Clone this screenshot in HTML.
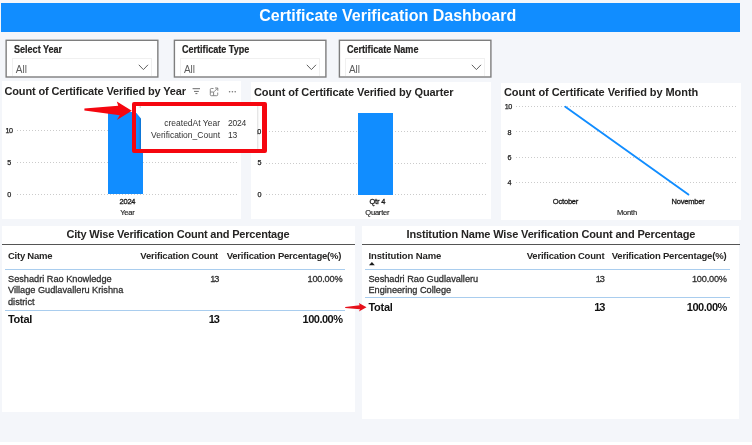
<!DOCTYPE html>
<html>
<head>
<meta charset="utf-8">
<title>Certificate Verification Dashboard</title>
<style>
*{box-sizing:border-box;margin:0;padding:0}
html,body{width:752px;height:445px;overflow:hidden;background:#fff}
body{font-family:"Liberation Sans",sans-serif;color:#252423;position:relative}
.bg{position:absolute;left:0;top:0;width:752px;height:442px;background:#f4f6fa}
.abs{position:absolute;white-space:nowrap}
.hdr{position:absolute;left:1.3px;top:3px;width:739.2px;height:28.5px;background:#118dff}
.hdr span{position:absolute;left:258px;top:1.6px;font-size:16px;font-weight:bold;color:#fff;line-height:22px;white-space:nowrap}
.slicer{position:absolute;top:39.5px;width:153px;height:38.4px;overflow:hidden}
.slicer .lbl{position:absolute;left:8.3px;top:4.6px;font-size:10px;font-weight:bold;line-height:12px;color:#252423;white-space:nowrap;transform:scaleX(0.905);transform-origin:0 0;-webkit-text-stroke:0.2px #252423}
.slicer .box{position:absolute;left:6px;top:18px;width:140px;height:18px;border:1px solid #f0f0f0;border-bottom:none}
.slicer .all{position:absolute;left:10.3px;top:24.6px;font-size:10px;line-height:12px;color:#5c5c5c;white-space:nowrap}
.slicer svg{position:absolute;left:132.4px;top:24.6px}
.panel{position:absolute;background:#fff}
.ttl{position:absolute;font-size:11px;font-weight:bold;line-height:14px;color:#252423;white-space:nowrap}
.ax{position:absolute;font-size:7.2px;line-height:9px;color:#1c1c1c;white-space:nowrap;-webkit-text-stroke:0.25px #1c1c1c;letter-spacing:-0.45px}
.axc{position:absolute;font-size:7.5px;line-height:9px;color:#1c1c1c;white-space:nowrap;transform:translateX(-50%);-webkit-text-stroke:0.15px #1c1c1c;letter-spacing:-0.2px}
.grid{position:absolute;height:1px;background:repeating-linear-gradient(90deg,#cbcbcb 0 1px,transparent 1px 3px)}
.th{position:absolute;font-size:9.5px;font-weight:bold;line-height:12px;color:#252423;white-space:nowrap;letter-spacing:-0.2px}
.td{position:absolute;font-size:9.2px;line-height:11.7px;color:#2e2e2e;white-space:nowrap;-webkit-text-stroke:0.28px #2e2e2e}
.tot{position:absolute;font-size:11px;font-weight:bold;line-height:14px;color:#111;white-space:nowrap}
.r{transform:translateX(-100%)}
.tk{-webkit-text-stroke:0.32px #1c1c1c}
.dark{position:absolute;height:1px;background:#555}
.blue{position:absolute;height:1px;background:#a9cdee}
</style>
</head>
<body>
<div id="wrap" style="position:absolute;left:0;top:0;width:752px;height:445px;will-change:transform">
<div class="bg"></div>

<!-- header -->
<div class="hdr"><span>Certificate Verification Dashboard</span></div>

<!-- slicers -->
<svg class="abs" style="left:0;top:36px" width="500" height="46" viewBox="0 36 500 46">
  <g fill="#fff" stroke="#7e7e7e" stroke-width="1.4">
    <rect x="6.15" y="40.3" width="151.7" height="36.7"/>
    <rect x="174.4" y="40.3" width="151.5" height="36.7"/>
    <rect x="339.4" y="40.3" width="151.5" height="36.7"/>
  </g>
</svg>
<div class="slicer" style="left:5.5px">
  <div class="lbl">Select Year</div><div class="box"></div><div class="all">All</div>
  <svg width="11" height="7" viewBox="0 0 11 7"><path d="M0.8 0.8 L5.4 5.6 L10 0.8" fill="none" stroke="#606060" stroke-width="1"/></svg>
</div>
<div class="slicer" style="left:173.6px">
  <div class="lbl">Certificate Type</div><div class="box"></div><div class="all">All</div>
  <svg width="11" height="7" viewBox="0 0 11 7"><path d="M0.8 0.8 L5.4 5.6 L10 0.8" fill="none" stroke="#606060" stroke-width="1"/></svg>
</div>
<div class="slicer" style="left:338.6px">
  <div class="lbl">Certificate Name</div><div class="box"></div><div class="all">All</div>
  <svg width="11" height="7" viewBox="0 0 11 7"><path d="M0.8 0.8 L5.4 5.6 L10 0.8" fill="none" stroke="#606060" stroke-width="1"/></svg>
</div>

<!-- panel 1 : by Year -->
<div class="panel" style="left:1.5px;top:80.6px;width:239.7px;height:138.2px"></div>
<div class="ttl" style="left:4.5px;top:84px;letter-spacing:-0.15px">Count of Certificate Verified by Year</div>
<svg class="abs" style="left:192px;top:87px" width="46" height="10" viewBox="0 0 46 10">
  <g stroke="#7a7a7a" stroke-width="0.9" fill="none">
    <path d="M0.6 1.7h7.4M2 4.4h4.8M3.4 6.6h2" stroke="#6c6c6c" stroke-width="1"/>
    <path d="M21.5 1.5h-2.2a1 1 0 0 0-1 1v5.2a1 1 0 0 0 1 1h5.4a1 1 0 0 0 1-1V5.6M18.3 5h3.3v3.6M22 4.8l3.6-3.6M23 1h2.8v2.8"/>
  </g>
  <g fill="#777"><circle cx="37.6" cy="4.8" r="0.8"/><circle cx="40.4" cy="4.8" r="0.8"/><circle cx="43.2" cy="4.8" r="0.8"/></g>
</svg>
<div class="grid" style="left:17px;top:130px;width:222px"></div>
<div class="grid" style="left:17px;top:162px;width:222px"></div>
<div class="grid" style="left:17px;top:194px;width:222px"></div>
<div class="ax" style="left:5.5px;top:126px">10</div>
<div class="ax" style="left:7.2px;top:158px">5</div>
<div class="ax" style="left:7.2px;top:189.5px">0</div>
<div class="abs" style="left:108.4px;top:111.6px;width:34.2px;height:82.4px;background:#118dff"></div>
<div class="axc tk" style="left:127.4px;top:196.5px">2024</div>
<div class="axc" style="left:127.4px;top:207.5px">Year</div>

<!-- panel 2 : by Quarter -->
<div class="panel" style="left:250.8px;top:82.4px;width:240.1px;height:137px"></div>
<div class="ttl" style="left:254px;top:84.5px;letter-spacing:-0.1px">Count of Certificate Verified by Quarter</div>
<div class="grid" style="left:266px;top:131px;width:221px"></div>
<div class="grid" style="left:266px;top:163px;width:221px"></div>
<div class="grid" style="left:266px;top:194px;width:221px"></div>
<div class="ax" style="left:253.8px;top:126.6px">10</div>
<div class="ax" style="left:257.4px;top:158.4px">5</div>
<div class="ax" style="left:257.4px;top:190.2px">0</div>
<div class="abs" style="left:358.3px;top:113px;width:34.5px;height:81.6px;background:#118dff"></div>
<div class="axc tk" style="left:377.3px;top:197px">Qtr 4</div>
<div class="axc" style="left:377.3px;top:208px">Quarter</div>

<!-- panel 3 : by Month -->
<div class="panel" style="left:501.3px;top:83.3px;width:239.4px;height:136.4px"></div>
<div class="ttl" style="left:504px;top:84.5px;letter-spacing:-0.07px">Count of Certificate Verified by Month</div>
<div class="grid" style="left:515.5px;top:106px;width:222.5px"></div>
<div class="grid" style="left:515.5px;top:131px;width:222.5px"></div>
<div class="grid" style="left:515.5px;top:157px;width:222.5px"></div>
<div class="grid" style="left:515.5px;top:182px;width:222.5px"></div>
<div class="ax" style="left:504.8px;top:102.3px">10</div>
<div class="ax" style="left:507.6px;top:127.5px">8</div>
<div class="ax" style="left:507.6px;top:152.8px">6</div>
<div class="ax" style="left:507.6px;top:178px">4</div>
<svg class="abs" style="left:500px;top:82px" width="241" height="138" viewBox="500 82 241 138">
  <line x1="565.3" y1="106.8" x2="688.4" y2="194.6" stroke="#118dff" stroke-width="1.9" stroke-linecap="round"/>
</svg>
<div class="axc tk" style="left:565.5px;top:197px">October</div>
<div class="axc tk" style="left:688px;top:197px">November</div>
<div class="axc" style="left:627px;top:208px">Month</div>

<!-- tooltip + red annotation -->
<div class="abs" style="left:141.3px;top:105px;width:115.7px;height:45px;background:#fff;box-shadow:-1.5px 0 2px rgba(0,0,0,0.22),1px 0 2px rgba(0,0,0,0.12)"></div>
<svg class="abs" style="left:136px;top:108px" width="8" height="13" viewBox="136 108 8 13"><path d="M136 108 H142.5 V120.6 L136 112.6 Z" fill="#fff"/></svg>
<div class="abs r" style="left:220px;top:118px;font-size:8.5px;line-height:11px;color:#333">createdAt Year</div>
<div class="abs" style="left:228px;top:118px;font-size:8.5px;line-height:11px;color:#333;letter-spacing:-0.25px">2024</div>
<div class="abs r" style="left:220px;top:130px;font-size:8.5px;line-height:11px;color:#333">Verification_Count</div>
<div class="abs" style="left:228px;top:130px;font-size:8.5px;line-height:11px;color:#333;letter-spacing:-0.25px">13</div>
<div class="abs" style="left:131.8px;top:102px;width:135px;height:50.6px;border:4.8px solid #f5060f;border-right-width:5.6px;border-radius:2px"></div>
<svg class="abs" style="left:80px;top:98px" width="56" height="26" viewBox="80 98 56 26">
  <path d="M84.4 108.4 L118.2 105.8 L116.8 101.6 L131.8 110.8 L116.8 120 L119.8 115.2 L84.4 110.6 Z" fill="#f5060f"/>
</svg>

<!-- table 1 : City -->
<div class="panel" style="left:1.5px;top:226px;width:353.5px;height:185.6px"></div>
<div class="ttl" style="left:66.5px;top:227px;letter-spacing:-0.2px">City Wise Verification Count and Percentage</div>
<div class="dark" style="left:1.5px;top:244.2px;width:353.5px"></div>
<div class="th" style="left:8px;top:249.5px;letter-spacing:-0.25px">City Name</div>
<div class="th r" style="left:218px;top:249.5px">Verification Count</div>
<div class="th r" style="left:341.3px;top:249.5px">Verification Percentage(%)</div>
<div class="blue" style="left:4.5px;top:268.6px;width:340.5px"></div>
<div class="td" style="left:8px;top:273.5px">Seshadri Rao Knowledge<br>Village Gudlavalleru Krishna<br>district</div>
<div class="td r" style="left:218.3px;top:273.5px;letter-spacing:-1.1px">13</div>
<div class="td r" style="left:342.4px;top:273.5px;letter-spacing:-0.2px">100.00%</div>
<div class="blue" style="left:4.5px;top:309.5px;width:340.5px"></div>
<div class="tot" style="left:8px;top:312px;letter-spacing:-0.3px">Total</div>
<div class="tot r" style="left:219px;top:312px;letter-spacing:-1px">13</div>
<div class="tot r" style="left:342.5px;top:312px;letter-spacing:-0.5px">100.00%</div>

<!-- table 2 : Institution -->
<div class="panel" style="left:361.7px;top:226px;width:377.8px;height:192.5px"></div>
<div class="ttl" style="left:406.5px;top:227px;letter-spacing:-0.15px">Institution Name Wise Verification Count and Percentage</div>
<div class="dark" style="left:361.6px;top:244.2px;width:378px"></div>
<div class="th" style="left:368.4px;top:249.5px;letter-spacing:-0.1px">Institution Name</div>
<svg class="abs" style="left:368.8px;top:262.4px" width="7" height="4" viewBox="0 0 7 4"><path d="M0 3.3 L2.9 0 L5.8 3.3 Z" fill="#1a1a1a"/></svg>
<div class="th r" style="left:604.4px;top:249.5px">Verification Count</div>
<div class="th r" style="left:726.4px;top:249.5px">Verification Percentage(%)</div>
<div class="blue" style="left:365.2px;top:268.6px;width:364.5px"></div>
<div class="td" style="left:368.4px;top:273.5px">Seshadri Rao Gudlavalleru<br>Engineering College</div>
<div class="td r" style="left:603.8px;top:273.5px;letter-spacing:-1.1px">13</div>
<div class="td r" style="left:726.8px;top:273.5px;letter-spacing:-0.2px">100.00%</div>
<div class="blue" style="left:365.2px;top:297.4px;width:364.5px"></div>
<div class="tot" style="left:368.5px;top:300.2px;letter-spacing:-0.3px">Total</div>
<div class="tot r" style="left:604.5px;top:300.2px;letter-spacing:-1px">13</div>
<div class="tot r" style="left:726.8px;top:300.2px;letter-spacing:-0.5px">100.00%</div>

<!-- small red arrow -->
<svg class="abs" style="left:344px;top:301px" width="24" height="13" viewBox="344 301 24 13">
  <path d="M345.2 306.9 L359.6 305.3 L358.9 303 L366.5 307.3 L358.9 311.6 L360 309.3 L345.2 308.1 Z" fill="#e6101a"/>
</svg>
</div>
</body>
</html>
